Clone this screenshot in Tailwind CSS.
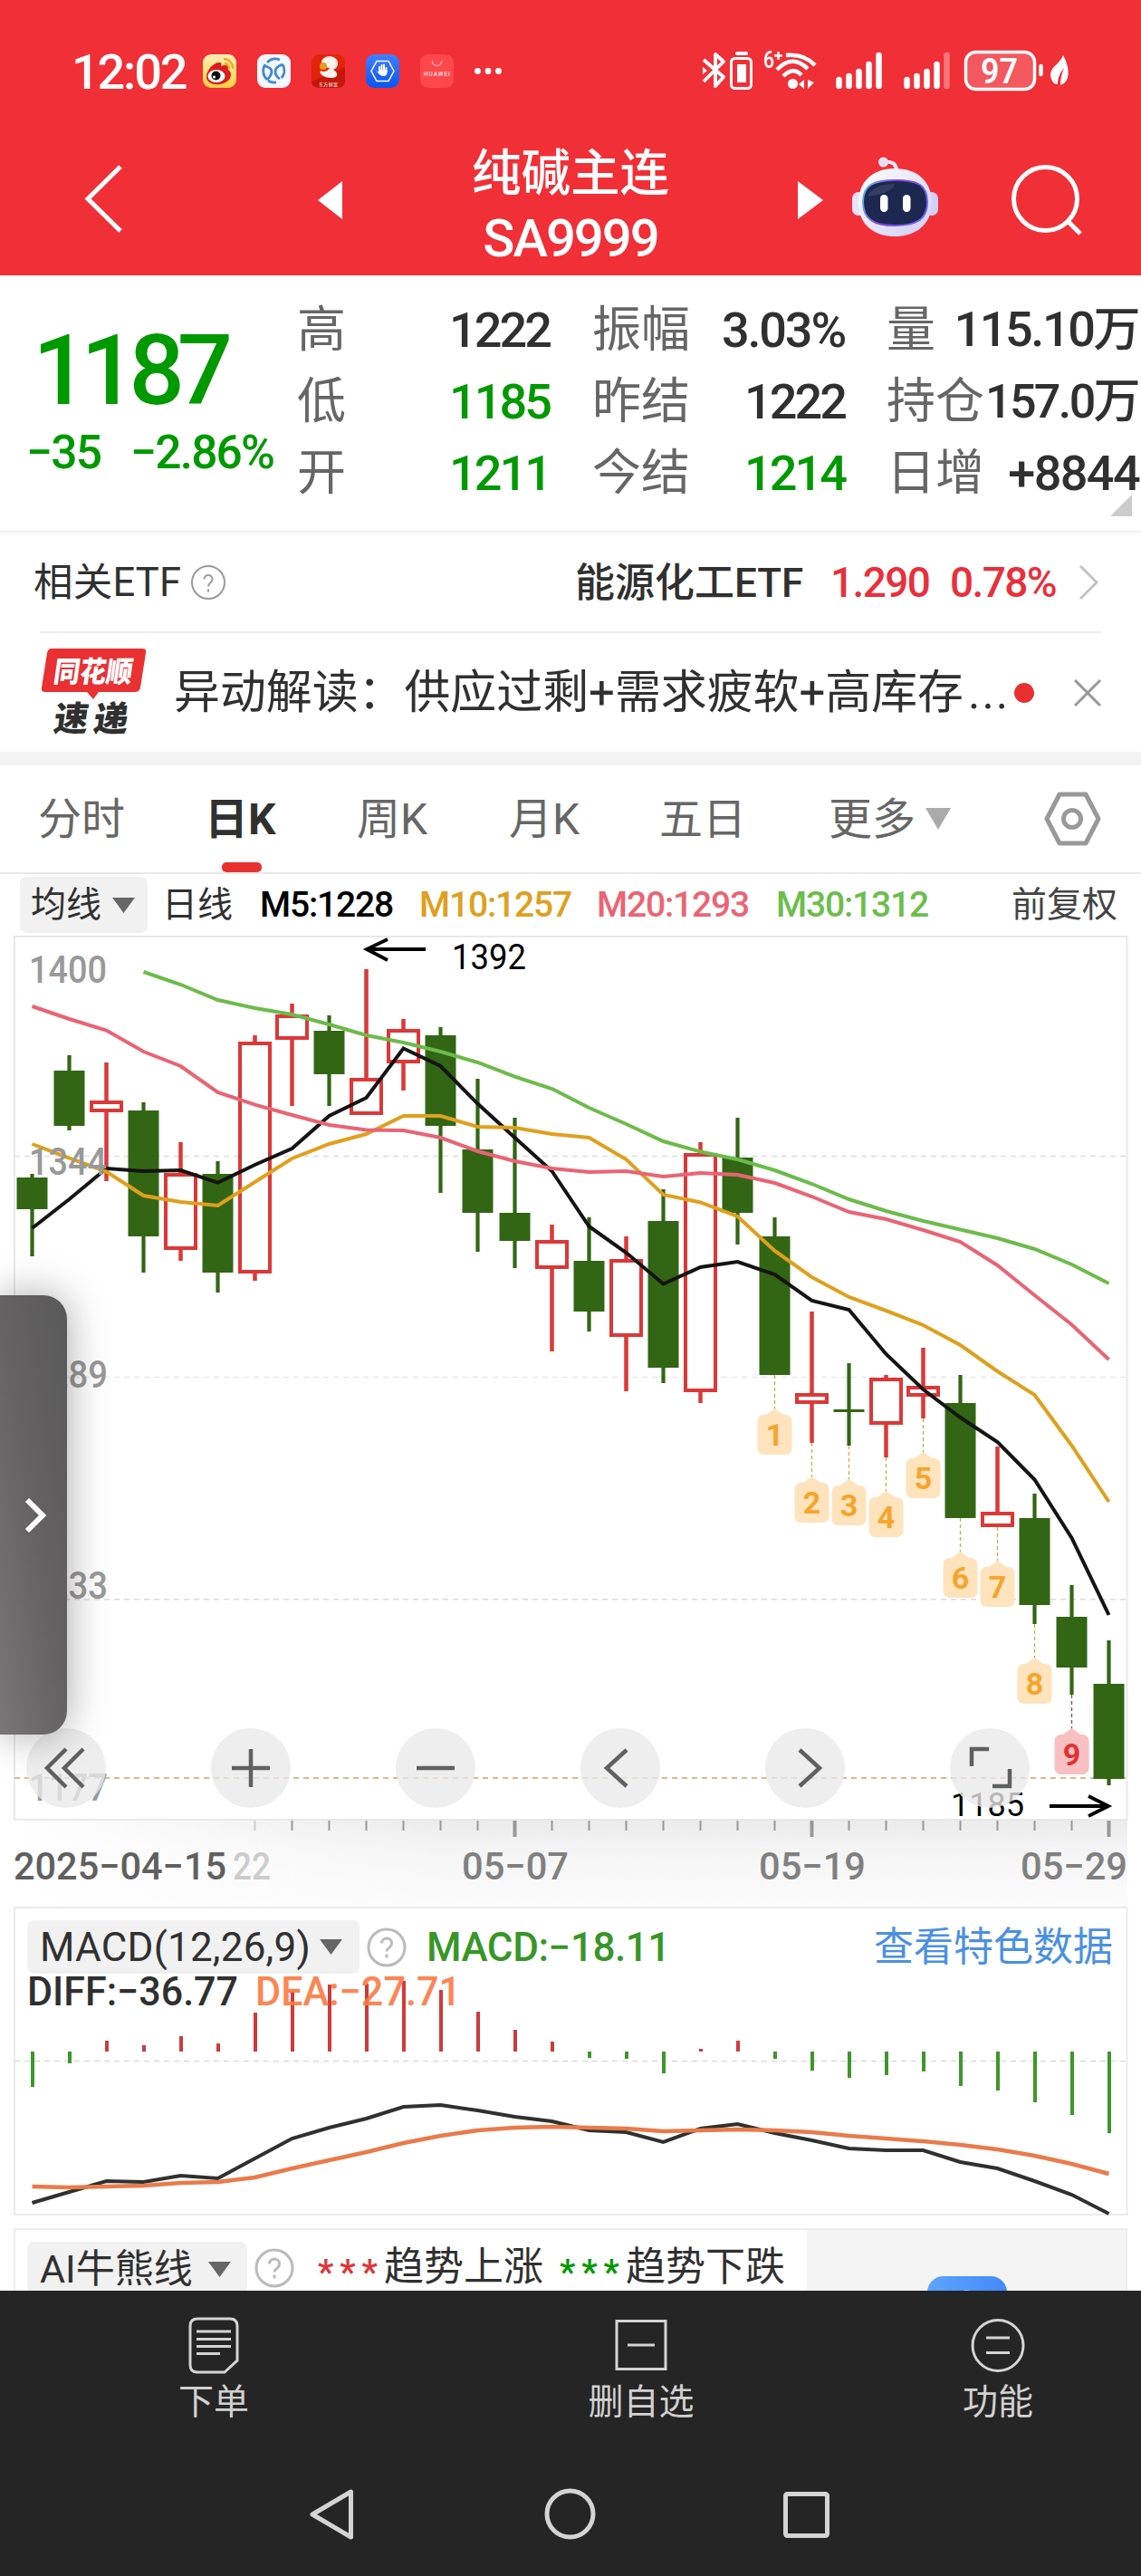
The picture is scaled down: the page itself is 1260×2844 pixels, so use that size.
<!DOCTYPE html>
<html lang="zh-CN">
<head>
<meta charset="utf-8">
<title>纯碱主连 SA9999</title>
<script src="https://cdn.jsdelivr.net/npm/@tailwindcss/browser@4"></script>
</head>
<body class="bg-white">
<div class="relative flex h-[2844px] w-[1260px] flex-col overflow-hidden bg-white font-[Roboto,'Noto_Sans_CJK_SC',sans-serif] whitespace-nowrap text-[#303030]">

  <!-- header -->
  <header class="flex h-[304px] shrink-0 flex-col bg-[#f12f37] text-white">
    <div class="flex h-[158px] items-center pl-[79px]">
      <span class="mt-[2px] w-[145px] text-[54px] leading-none font-medium tracking-[-0.04em]">12:02</span>
      <svg class="w-[338px] shrink-0" height="158" viewBox="224 0 338 158">
        <defs>
          <linearGradient id="wb" x1="0" y1="0" x2="0" y2="1"><stop offset="0" stop-color="#fff0b8"/><stop offset="1" stop-color="#ffcf3e"/></linearGradient>
          <linearGradient id="hn" x1="0" y1="0" x2="0" y2="1"><stop offset="0" stop-color="#3f80ff"/><stop offset="1" stop-color="#0b55f0"/></linearGradient>
        </defs>
        <rect x="224" y="60" width="37" height="37" rx="9" fill="url(#wb)"/>
        <path d="M228 85c0-8 8-16 14-16 3 0 3 2 2 4 5-2 9-1 8 4 4 2 4 8 0 12-8 7-24 5-24-4z" fill="#d81e1e"/>
        <ellipse cx="239" cy="84" rx="9.500" ry="7" fill="#fff"/><circle cx="238.500" cy="83.500" r="5" fill="#111"/><circle cx="236.500" cy="85" r="1.500" fill="#fff"/>
        <path d="M247 65a10 10 0 0 1 10 11M248 70a6 6 0 0 1 5 6" fill="none" stroke="#f5a623" stroke-width="2.500"/>
        <rect x="284" y="60" width="37" height="37" rx="9" fill="#f5f7fb"/>
        <path d="M293 71a13 13 0 0 0 2 17M312 71a13 13 0 0 1-1 15M295 69a13 13 0 0 1 14-3M296 89a13 13 0 0 0 9 2" fill="none" stroke="#3f88d8" stroke-width="2.800"/>
        <path d="M293 73q7 2 7 6t-5 9M312 71q-8 3-8 8t5 8" fill="none" stroke="#3f88d8" stroke-width="2.800"/>
        <rect x="344" y="60" width="37" height="37" rx="9" fill="#e2240c"/>
        <path d="M344 90l37-16v15q0 8-9 8h-19q-9 0-9-7z" fill="#c41808"/>
        <path d="M355 68c2-8 18-8 18 2 0 4-3 6-5 7 6 3 6 9-2 9-9 0-14-5-12-8 3 2 8 1 10-3-3 0-8-2-9-7z" fill="#fdf3ea"/><circle cx="357" cy="73" r="4" fill="#e2a01c"/>
        <text x="352" y="95" font-size="5" fill="#fff" textLength="21">东方财富</text>
        <rect x="404" y="60" width="37" height="37" rx="9" fill="url(#hn)"/>
        <path d="M416 67.500h13l6 11-6 11h-13l-6-11z" fill="none" stroke="#fff" stroke-width="1.500"/>
        <path d="M419 79v-5M421.500 78v-6M424 78v-6.500M426.500 79v-4" stroke="#fff" stroke-width="2" stroke-linecap="round"/><path d="M415.500 78l3 2v-3h9v3q0 4-4 4-4 0-8-6z" fill="#fff"/>
        <rect x="464" y="60" width="37" height="37" rx="9" fill="#ff474c"/>
        <path d="M477 67q1 5.500 5.500 5.500t5.500-5.500" fill="none" stroke="#ffc6c6" stroke-width="1.200"/>
        <text x="468" y="83.500" font-size="6.500" font-weight="700" fill="#ffd5d5" textLength="29">HUAWEI</text>
        <g fill="#fff"><circle cx="527.500" cy="78.500" r="3.400"/><circle cx="539" cy="78.500" r="3.400"/><circle cx="550.500" cy="78.500" r="3.400"/></g>
      </svg>
      <svg class="ml-auto w-[500px] shrink-0" height="158" viewBox="760 0 500 158" fill="none" stroke="#fff">
        <path d="M777 66l22 19-9 10V60l9 8-22 22" stroke-width="3.800" stroke-linejoin="round"/><path d="M776 74l5 4-5 4z" fill="#fff" stroke="none"/>
        <rect x="807.500" y="64.500" width="22" height="33" rx="4" stroke-width="3"/><rect x="814" y="71" width="10" height="20" fill="#fff" stroke="none"/><path d="M814 59h10" stroke-width="4" stroke-linecap="round"/>
        <path d="M868 61q20-2 32 11M858 77q17-18 34-1M865 84q11-11 20-1" stroke-width="4.400"/><circle cx="875.500" cy="92.500" r="5.500" fill="#fff" stroke="none"/>
        <path d="M882 93l6-5v10zM899 91l-7 7V88z" fill="#fff" stroke="none"/>
        <text x="843" y="75" font-size="25" font-weight="500" fill="#fff" stroke="none" textLength="12" lengthAdjust="spacingAndGlyphs">6</text><path d="M855 61.500h9M859.500 57v9" stroke-width="2.400"/>
        <path d="M926.500 88v7M937.500 84v11M948.500 79v16M959.500 71v24M970.500 61v34M1001.500 88v7M1012.500 84v11M1023.500 79v16M1034.500 71v24" stroke-width="6.500" stroke-linecap="round"/>
        <path d="M1045.500 61v34" stroke-width="6.500" stroke-linecap="round" stroke-opacity=".35"/>
        <rect x="1066.500" y="57.500" width="76" height="41" rx="11" stroke-width="3.500" fill="#fff" fill-opacity=".2"/>
        <text x="1083" y="91.500" font-size="38" font-weight="600" fill="#fff" stroke="none" textLength="41" lengthAdjust="spacingAndGlyphs">97</text>
        <path d="M1149.500 73v9" stroke-width="4.500" stroke-linecap="round"/>
        <path d="M1174 61c8 14 8 30-3 33 0-8 2-14 4-19-5 6-7 12-7 18-4 1-8-5-8-11 1-9 10-11 14-21z" fill="#fff" stroke="none"/>
      </svg>
    </div>
    <div class="flex h-[146px]">
      <svg class="w-[500px] shrink-0" height="146" viewBox="0 158 500 146" fill="none"><path d="M133 184L97 219.500l36 35.500" stroke="#fff" stroke-width="5"/><path d="M378 200v42l-27-21z" fill="#fff"/></svg>
      <div class="flex w-[260px] shrink-0 flex-col items-center font-medium">
        <div class="mt-[3px] h-[70px] text-[54.500px] leading-[60px]">纯碱主连</div>
        <div class="text-[58px] leading-[64px] tracking-[-0.035em]">SA9999</div>
      </div>
      <svg class="w-[500px] shrink-0" height="146" viewBox="760 158 500 146" fill="none">
        <defs>
          <linearGradient id="rb" x1="0" y1="0" x2="1" y2="1"><stop offset="0" stop-color="#fff"/><stop offset="1" stop-color="#cfcdf2"/></linearGradient>
          <linearGradient id="rs" x1="0" y1="0" x2="1" y2=".3"><stop offset="0" stop-color="#59c3e8"/><stop offset=".5" stop-color="#8a3fd8"/><stop offset="1" stop-color="#6a62f0"/></linearGradient>
        </defs>
        <path d="M881 200v42l28-21z" fill="#fff"/>
        <path d="M976 179q14-2 14 10" stroke="#ece8fb" stroke-width="4"/><circle cx="975.500" cy="179" r="5.500" fill="#dfe0f8"/>
        <rect x="941" y="212" width="14" height="26" rx="7" fill="#e7e4fa"/><rect x="1022" y="212" width="14" height="26" rx="7" fill="#d5d0f6"/>
        <path d="M988 186c26 0 41 15 41 38s-17 37-41 37-40-14-40-37 15-38 40-38z" fill="url(#rb)"/>
        <path d="M988 199c24 0 36 4 36 24s-13 26-36 26-35-7-35-26 12-24 35-24z" fill="#1d2850" stroke="url(#rs)" stroke-width="2"/>
        <path d="M958 217q6-14 30-14-2 10-30 14z" fill="#4a5476" opacity=".5"/>
        <rect x="972" y="215" width="8.500" height="19" rx="4.200" fill="#fff"/><rect x="997" y="215" width="8.500" height="19" rx="4.200" fill="#fff"/>
        <circle cx="1154.500" cy="219.500" r="35" stroke="#fff" stroke-width="5"/><path d="M1179 244l14 14" stroke="#fff" stroke-width="5"/>
      </svg>
    </div>
  </header>

  <!-- quote -->
  <section class="relative flex h-[284px] shrink-0 border-b-2 border-[#eeeeee]">
    <div class="w-[328px] shrink-0 font-medium text-[#009900]">
      <div class="mt-[49px] pl-[36px] text-[108px] leading-[112px] tracking-[-0.075em]">1187</div>
      <div class="mt-[5px] flex pl-[29px] text-[51.500px] leading-[60px] tracking-[-0.035em]"><span class="w-[115px]">−35</span><span>−2.86%</span></div>
    </div>
    <div class="grid auto-rows-[79px] grid-cols-[280px_279px_280px] gap-x-[46px] pt-[21px] text-[54px] leading-[60px]">
      <div class="flex items-center justify-between"><span class="text-[#666]">高</span><span class="pr-[1px] font-medium tracking-[-0.055em]">1222</span></div>
      <div class="flex items-center justify-between"><span class="text-[#666]">振幅</span><span class="font-medium tracking-[-0.04em]">3.03%</span></div>
      <div class="flex items-center justify-between"><span class="text-[#666]">量</span><span class="pr-[2px] font-medium tracking-[-0.045em]">115.10<span class="text-[52px]">万</span></span></div>
      <div class="flex items-center justify-between"><span class="text-[#666]">低</span><span class="pr-[1px] font-medium tracking-[-0.055em] text-[#009900]">1185</span></div>
      <div class="flex items-center justify-between"><span class="text-[#666]">昨结</span><span class="font-medium tracking-[-0.055em]">1222</span></div>
      <div class="flex items-center justify-between"><span class="text-[#666]">持仓</span><span class="pr-[2px] text-[52px] font-medium tracking-[-0.05em]">157.0万</span></div>
      <div class="flex items-center justify-between"><span class="text-[#666]">开</span><span class="pr-[1px] font-medium tracking-[-0.055em] text-[#009900]">1211</span></div>
      <div class="flex items-center justify-between"><span class="text-[#666]">今结</span><span class="font-medium tracking-[-0.055em] text-[#009900]">1214</span></div>
      <div class="flex items-center justify-between"><span class="text-[#666]">日增</span><span class="pr-[1px] font-medium tracking-[-0.03em]">+8844</span></div>
    </div>
    <svg class="absolute right-[10px] bottom-[16px]" width="24" height="24" viewBox="0 0 24 24"><path d="M24 0v24H0z" fill="#cbcbcb"/></svg>
  </section>

  <!-- related ETF -->
  <section class="mx-[44px] flex h-[111px] shrink-0 items-center border-b-2 border-[#eeeeee]">
    <span class="-ml-[7px] mt-[2px] w-[174px] text-[43.500px] tracking-[0.005em]">相关ETF</span>
    <svg class="-ml-[1px]" width="40" height="40" viewBox="0 0 40 40" fill="none" stroke="#999" stroke-width="2"><circle cx="20" cy="20" r="18"/><path d="M15.500 16.500c0-6 9-6 9 0 0 4-4.500 4-4.500 8M20 27.500v3"/></svg>
    <span class="mt-[2px] ml-auto w-[282px] text-[44px] font-medium">能源化工ETF</span>
    <span class="mt-[2px] w-[132px] text-[46px] font-medium tracking-[-0.035em] text-[#e8303c]">1.290</span>
    <span class="mt-[2px] w-[141px] text-[46px] font-medium tracking-[-0.035em] text-[#e8303c]">0.78%</span>
    <svg width="26" height="40" viewBox="0 0 26 40" fill="none" stroke="#c4c4c4" stroke-width="3"><path d="M3 2l18 18L3 38"/></svg>
  </section>

  <!-- news -->
  <section class="flex h-[131px] shrink-0 items-center pl-[45px]">
    <svg class="w-[147px] shrink-0" height="131" viewBox="45 699 147 131">
      <path d="M57 716h100q5 0 4 5l-6 38q-1 5-6 5h-40l-6 8-7-8H50q-5 0-4-5l6-38q1-5 5-5z" fill="#e93033"/>
      <text x="0" y="0" transform="translate(58 753) skewX(-8)" font-size="32" font-weight="900" fill="#fff" textLength="87" lengthAdjust="spacingAndGlyphs">同花顺</text>
      <text x="0" y="0" transform="translate(58 807) skewX(-8)" font-size="38" font-weight="900" fill="#303030" textLength="82" lengthAdjust="spacing">速递</text>
    </svg>
    <span class="mt-[2px] w-[928px] shrink-0 text-[50.900px]">异动解读：供应过剩+需求疲软+高库存<span class="ml-[5px] tracking-[2px]">...</span></span>
    <span class="size-[22px] shrink-0 rounded-full bg-[#e93030]"></span>
    <svg class="ml-[44px]" width="30" height="30" viewBox="0 0 30 30" stroke="#999" stroke-width="3"><path d="M1 1l28 28M29 1L1 29"/></svg>
  </section>
  <div class="h-[15px] shrink-0 bg-[#f4f4f4]"></div>

  <!-- period tabs -->
  <nav class="flex h-[120px] shrink-0 border-b-2 border-[#e8e8e8] pl-[42px] text-[48px] leading-[120px] text-[#666]">
    <span class="w-[184px]">分时</span>
    <span class="relative w-[168px] font-bold text-[#303030]">日K<i class="absolute bottom-0 left-[19px] h-[11px] w-[44px] rounded-[5px] bg-[#e93030]"></i></span>
    <span class="w-[168px]">周K</span>
    <span class="w-[166px]">月K</span>
    <span class="w-[187px]">五日</span>
    <span class="w-[107px]">更多</span>
    <svg class="mt-[47px]" width="28" height="24" viewBox="0 0 28 24"><path d="M0 0h28L14 24z" fill="#aaa"/></svg>
    <svg class="mt-[27px] ml-[102px]" width="64" height="64" viewBox="0 0 64 64" fill="none" stroke="#999" stroke-width="5" stroke-linejoin="round"><path d="M18 5h29l14 27-14 27H18L4 32z"/><circle cx="32" cy="32" r="9.500"/></svg>
  </nav>

  <!-- moving averages -->
  <section class="flex h-[68px] shrink-0 items-center pl-[22px] text-[39px]">
    <div class="flex h-[62px] w-[141px] shrink-0 items-center rounded-[8px] bg-[#f1f1f1] pl-[12px]"><span class="w-[90px]">均线</span><svg width="25" height="17" viewBox="0 0 25 17"><path d="M0 0h25L12.500 17z" fill="#666"/></svg></div>
    <span class="ml-[16px] w-[108px]">日线</span>
    <span class="w-[176px] font-medium tracking-[-0.03em] text-black">M5:1228</span>
    <span class="w-[196px] font-medium tracking-[-0.03em] text-[#e0a01e]">M10:1257</span>
    <span class="w-[198px] font-medium tracking-[-0.03em] text-[#ec6474]">M20:1293</span>
    <span class="w-[260px] font-medium tracking-[-0.03em] text-[#6cbe4b]">M30:1312</span>
    <span class="text-[#444]">前复权</span>
  </section>

  <!-- candlestick chart -->
  <svg id="k" class="shrink-0" width="1260" height="1072" viewBox="0 1033 1260 1072"></svg>

  <!-- MACD -->
  <section class="relative h-[341px] shrink-0">
    <svg id="m" class="absolute inset-0" width="1260" height="341" viewBox="0 2105 1260 341"></svg>
    <div class="relative flex h-[89px] items-center pl-[30px] text-[44px] leading-[56px]">
      <div class="flex h-[59px] w-[367px] shrink-0 items-center rounded-[8px] bg-[#f1f1f1] pl-[14px]"><span class="w-[309px] tracking-[0.005em]">MACD(12,26,9)</span><svg width="25" height="17" viewBox="0 0 25 17"><path d="M0 0h25L12.500 17z" fill="#666"/></svg></div>
      <svg class="ml-[8px] shrink-0" width="44" height="44" viewBox="0 0 44 44" fill="none" stroke="#bbb" stroke-width="3"><circle cx="22" cy="22" r="20"/><path d="M16.500 17.500c0-7.500 11-7.500 11 0 0 5-5.500 5-5.500 9M22 29.500v4"/></svg>
      <span class="ml-[22px] w-[494px] font-medium tracking-[-0.01em] text-[#389628]">MACD:−18.11</span>
      <span class="text-[#4a90e2]">查看特色数据</span>
    </div>
  </section>

  <!-- AI bull/bear -->
  <section class="mx-[15px] mt-[14px] flex h-[69px] shrink-0 overflow-hidden border-2 border-b-0 border-[#ededed]">
    <div class="mt-[13px] ml-[13px] flex h-[60px] w-[243px] shrink-0 items-center rounded-t-[8px] bg-[#f1f1f1] pl-[14px] text-[43px] leading-[52px]"><span class="w-[186px]">AI牛熊线</span><svg width="25" height="17" viewBox="0 0 25 17"><path d="M0 0h25L12.500 17z" fill="#666"/></svg></div>
    <svg class="mt-[20px] ml-[8px] shrink-0" width="44" height="44" viewBox="0 0 44 44" fill="none" stroke="#bbb" stroke-width="3"><circle cx="22" cy="22" r="20"/><path d="M16.500 17.500c0-7.500 11-7.500 11 0 0 5-5.500 5-5.500 9M22 29.500v4"/></svg>
    <div class="mt-[12px] ml-[26px] flex h-[58px] w-[540px] shrink-0 items-center text-[44px] leading-[52px]">
      <span class="mt-[12px] w-[73px] text-[38px] font-bold tracking-[7px] text-[#e03538]">***</span><span class="w-[194px]">趋势上涨</span><span class="mt-[12px] w-[73px] text-[38px] font-bold tracking-[7px] text-[#009900]">***</span><span>趋势下跌</span>
    </div>
    <div class="flex-1 bg-[#f5f4f4] pt-[51px] pl-[133px]"><svg width="88" height="40" viewBox="0 0 88 40"><defs><linearGradient id="bl"><stop offset="0" stop-color="#5ea4fd"/><stop offset="1" stop-color="#4389fb"/></linearGradient></defs><rect width="88" height="60" rx="18" fill="url(#bl)"/><circle cx="43" cy="34" r="17" fill="none" stroke="#fff" stroke-width="3"/></svg></div>
  </section>

  <!-- action bar -->
  <footer class="flex flex-1 flex-col bg-[#252525] text-[#d2d0d0]">
    <div class="flex h-[160px] pl-[118px] text-[39px] leading-[56px]">
      <div class="flex w-[236px] flex-col items-center pt-[27px]">
        <svg width="60" height="68" viewBox="0 0 60 68" fill="none" stroke="#d4d4d4" stroke-width="3"><path d="M12 4h36q8 0 8 8v38L42 63H12q-8 0-8-8V12q0-8 8-8z"/><path d="M11 18h38M11 26.500h38M11 34.500h38M11 42.500h26"/></svg>
        <span>下单</span>
      </div>
      <div class="flex w-[708px] flex-col items-center pt-[27px]">
        <svg width="60" height="68" viewBox="0 0 60 68" fill="none" stroke="#d4d4d4" stroke-width="3"><path d="M3 6.500h54v53H3zM15 33h30"/></svg>
        <span>删自选</span>
      </div>
      <div class="flex w-[80px] flex-col items-center pt-[27px]">
        <svg width="60" height="68" viewBox="0 0 60 68" fill="none" stroke="#d4d4d4" stroke-width="3"><circle cx="30" cy="33.500" r="28"/><path d="M17 25h26M17 41.500h26"/></svg>
        <span>功能</span>
      </div>
    </div>
    <svg class="shrink-0" width="1260" height="155" viewBox="0 2689 1260 155" fill="none" stroke="#d4d4d4" stroke-width="5" stroke-linejoin="round"><path d="M387.500 2751v50L345 2776z"/><circle cx="629.500" cy="2775.500" r="25.500"/><rect x="867.500" y="2753.500" width="46" height="46" rx="2"/></svg>
  </footer>

  <!-- side drawer handle -->
  <div class="absolute top-[1430px] left-0 flex h-[485px] w-[74px] items-center justify-center rounded-r-[26px] bg-linear-to-tr from-[#787677] via-[#646263] to-[#5a5959] pl-[4px] shadow-[0_0_46px_rgba(0,0,0,0.35)]">
    <svg width="26" height="42" viewBox="0 0 26 42" fill="none" stroke="#fff" stroke-width="6"><path d="M4 4l17 17L4 38"/></svg>
  </div>
</div>

<script>
const X = i => 35.5 + 41 * i;
// [isUp, high, bodyTop, bodyBottom, low] in canvas units
const candles = [
[0,1296,1300,1335,1387],[0,1165,1182,1243,1248],[1,1173,1215,1228,1304],[0,1217,1226,1365,1405],[1,1261,1295,1380,1392],
[0,1282,1296,1405,1427],[1,1143,1150,1406,1414],[1,1108,1120,1148,1221],[0,1121,1138,1186,1221],[1,1070,1190,1231,1231],
[1,1125,1136,1174,1204],[0,1134,1143,1243,1317],[0,1191,1269,1339,1382],[0,1234,1339,1370,1400],[1,1352,1369,1401,1492],
[0,1344,1392,1448,1470],[1,1365,1390,1476,1536],[0,1313,1348,1510,1527],[1,1261,1273,1537,1549],[0,1234,1278,1339,1374],
[0,1344,1365,1518,1518],[1,1448,1538,1550,1593],[0,1505,1556,1559,1596],[1,1518,1521,1573,1609],[1,1488,1530,1542,1566],
[0,1518,1549,1676,1676],[1,1597,1669,1686,1686],[0,1649,1676,1772,1793],[0,1750,1785,1841,1871],[0,1811,1859,1964,1971]];
const ma5=[1356,1324,1290,1293,1292,1305.7,1286,1268,1232,1212,1157.5,1177,1218.6,1256,1293,1354,1383,1417.5,1399,1393,1407,1436,1446,1495,1534,1565,1592,1633.5,1698,1783];
const ma10=[1263,1278.6,1293.6,1320,1327,1331,1305,1279,1263,1252,1232,1232,1244,1245,1252,1256,1280,1319,1327.5,1343,1381,1410,1432,1447,1463,1485,1514,1540,1596,1658];
const ma20=[1111,1125,1137.5,1161,1177,1206,1219.6,1231,1242,1247.5,1248,1256,1271,1282,1290,1294,1293,1299,1295,1297,1306,1321,1338,1346,1358,1371,1397,1430,1462.5,1501];
const ma30=[1073,1087,1104,1113,1120,1131,1143,1151,1161,1173,1188.6,1202,1223,1241,1260,1271.5,1280,1292,1307,1324,1337,1348,1357.5,1367,1379,1396,1417];
const line=(a,c,w,s=0)=>`<polyline points="${a.map((v,i)=>X(i+s)+','+v).join(' ')}" fill="none" stroke="${c}" stroke-width="${w}"/>`;
const txt=(s,x,y,w,c,f,wt=500)=>`<text x="${x}" y="${y}" font-size="${f}" font-weight="${wt}" fill="${c}" textLength="${w}" lengthAdjust="spacingAndGlyphs">${s}</text>`;
const grid=(y,c='#dcdcdc',w=1.5)=>`<path d="M16 ${y}H1244" stroke="${c}" stroke-width="${w}" stroke-dasharray="6 5"/>`;

let k='<defs><linearGradient id="ax" x1="0" y1="0" x2="0" y2="1"><stop offset="0" stop-color="#ebebeb"/><stop offset=".35" stop-color="#f5f5f5"/><stop offset="1" stop-color="#fbfbfb"/></linearGradient><linearGradient id="fd"><stop offset="0" stop-color="#fff"/><stop offset="1" stop-color="#fff" stop-opacity="0"/></linearGradient></defs>';
k+='<rect x="16" y="2010" width="1229" height="95" fill="url(#ax)"/><rect x="16" y="2009" width="480" height="96" fill="url(#fd)"/>';
k+='<rect x="16" y="1034" width="1228.500" height="975" fill="#fff" stroke="#e9e9e9" stroke-width="2"/>';
k+=grid(1276.5)+grid(1520.5,'#e8e8e8')+grid(1765.7)+grid(1963,'#c8a272');
candles.forEach(([up,h,t,b,l],i)=>{
  const x=X(i);
  if(up){k+=`<path d="M${x} ${h}V${t+1}M${x} ${b-1}V${l}" stroke="#dc3838" stroke-width="4.500"/><rect x="${x-16.5}" y="${t+2}" width="33" height="${b-t-4}" fill="#fff" stroke="#dc3838" stroke-width="4"/>`}
  else k+=`<path d="M${x} ${h}V${l}" stroke="#326614" stroke-width="4.200"/><rect x="${x-17}" y="${t}" width="34" height="${b-t}" fill="#326614"/>`;
});
k+=line(ma5,'#141414',4)+line(ma10,'#dfa01d',4)+line(ma20,'#e96474',4)+line(ma30,'#6cbb4b',4,3);
for(let n=1;n<=9;n++){
  const i=19+n,x=X(i),b=candles[i][4],r=n===9;
  k+=`<path d="M${x} ${b}V${b+38}" stroke="${r?'#a04040':'#d6a640'}" stroke-width="1.300" stroke-dasharray="4 3"/>`;
  k+=`<g fill="${r?'#f8c0c3':'#ffe3bd'}"><path d="M${x} ${b+37}l11 8h-22z"/><rect x="${x-19}" y="${b+44}" width="38" height="44" rx="7"/></g>`;
  k+=`<text x="${x}" y="${b+77.5}" font-size="34" font-weight="700" text-anchor="middle" fill="${r?'#e03232':'#f5a52c'}">${n}</text>`;
}
k+=txt('1400',32,1085,86,'#999',42)+txt('1344',32,1297,86,'#999',42)+txt('1289',32,1532,87,'#999',42)+txt('1233',32,1765,87,'#999',42)+txt('1177',32,1988,87,'#999',42);
k+=txt('1392',499,1070,82,'#000',38,400)+txt('1185',1050,2005,81,'#000',37,400);
k+='<path d="M470 1048H406M428 1037l-23 11 23 12M1159 1994H1223M1202 1983l22 11-22 11" fill="none" stroke="#000" stroke-width="3.800"/>';
['M0-21L-21 0l21 21M19-21L-2 0l21 21','M0-21V21M-21 0H21','M-21 0H21','M7-20L-15 0 7 20','M-6-20L16 0-6 20','M-1-21H-20V-2M3 20H22V1'].forEach((d,i)=>{
  k+=`<g transform="translate(${73+204*i} 1952)"><circle r="44" fill="#e9e9e9" fill-opacity=".78"/><path d="${d}" fill="none" stroke="#606060" stroke-width="4.500"/></g>`;
});
for(let i=6;i<30;i++){const L=i%8===5;k+=`<path d="M${X(i)} 2010V${L?2028:2021}" stroke="${i===6?'#ccc':'#999'}" stroke-width="${L?4:2}"/>`}
k+=txt('2025−04−15',15,2075,235,'#606060',43)+txt('22',257,2075,42,'#ccc',43)+txt('05−07',510,2075,118,'#808080',43)+txt('05−19',838,2075,118,'#808080',43)+txt('05−29',1127,2075,118,'#808080',43);
document.getElementById('k').innerHTML=k;

const bars=[2304,2278,2253,2258,2248,2256,2222,2199,2191,2190,2187,2197,2221,2241,2254,2272,2273,2289,2262,2253,2273,2286,2294,2291,2287,2303,2308,2321,2335,2355];
const diff=[2432,2420,2408,2409,2402,2405,2383,2361,2349,2339,2326,2324,2330,2337,2342,2352,2354,2365,2350,2345,2355,2363,2372,2374,2374,2387,2394,2408,2423,2444];
const dea=[2414,2415,2414,2413,2410,2409,2404,2394,2385,2376,2366,2358,2352,2349,2348,2349,2350,2353,2352,2351,2352,2354,2358,2361,2364,2368,2373,2380,2389,2400];
let m='<rect x="16" y="2106" width="1228.500" height="339" fill="none" stroke="#ebebeb" stroke-width="2"/>'+grid(2275.5);
bars.forEach((y,i)=>{m+=`<path d="M${X(i)+.5} 2265V${y}" stroke="${y>2265?'#3f962c':'#cf3b3b'}" stroke-width="4"/>`});
m+=txt('DIFF:−36.77',30,2214,233,'#303030',45)+`<g opacity=".9">${txt('DEA:−27.71',282,2214,227,'#fb7a42',45)}</g>`;
m+=line(diff,'#303030',4)+line(dea,'#e97b4b',4.5);
document.getElementById('m').innerHTML=m;
</script>
</body>
</html>
